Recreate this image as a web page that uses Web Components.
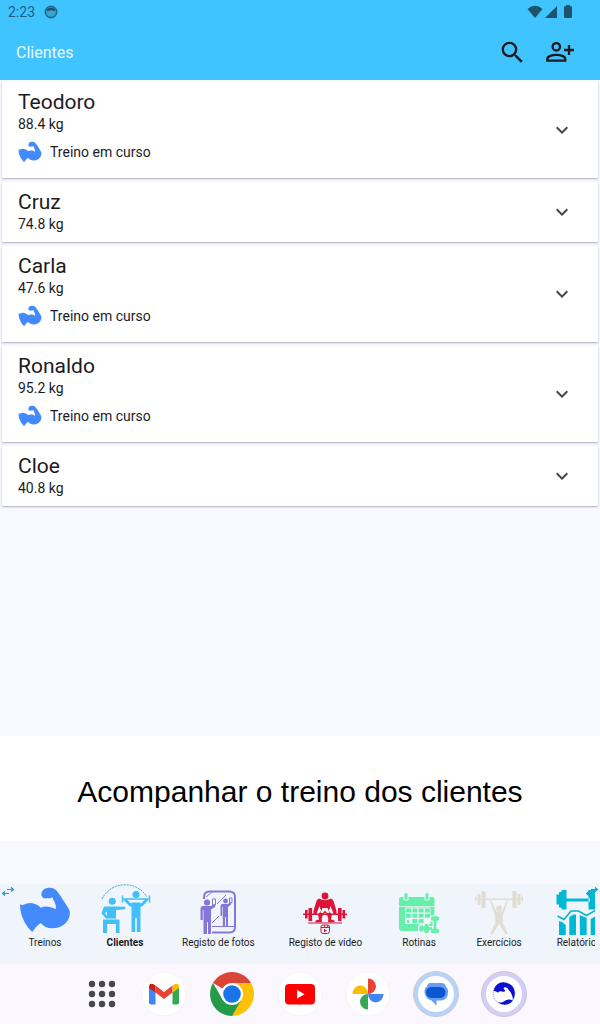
<!DOCTYPE html>
<html lang="pt">
<head>
<meta charset="utf-8">
<meta name="viewport" content="width=device-width, initial-scale=1">
<title>Clientes</title>
<style>
  body {
    margin: 0;
    background: #f8f9ff;
    color: #1b1b1f;
    font-family: Roboto, sans-serif;
  }
</style>
</head>
<body>
<training-app></training-app>

<script>
const ICONS = {
  camera: `<svg viewBox="0 0 14 14" width="14" height="14"><circle cx="7" cy="7" r="5.7" fill="#3aa5d4" stroke="#1d6a8c" stroke-width="1.6"/><path d="M2.600 4.800Q7 .4 11.400 4.800L10.400 6.500Q7 4.200 3.600 6.500z" fill="#1d546c"/></svg>`,
  wifi: `<svg viewBox="0 0 16 14" width="16" height="14"><path d="M.5 4Q8-2.500 15.500 4L8 13z" fill="#1d546c"/></svg>`,
  signal: `<svg viewBox="0 0 14 14" width="14" height="14"><path d="M13 1v12H1z" fill="#1d546c"/></svg>`,
  battery: `<svg viewBox="0 0 10 14" width="10" height="14"><path d="M3 0h4v1.200h1q1 0 1 1V12q0 1-1 1H2q-1 0-1-1V2.200q0-1 1-1h1z" fill="#1d546c"/></svg>`,
  search: `<svg viewBox="0 0 24 24" width="29" height="29"><path fill="#1b1b1f" d="M15.500 14h-.79l-.28-.27A6.471 6.471 0 0 0 16 9.500 6.500 6.500 0 1 0 9.500 16c1.610 0 3.090-.59 4.230-1.570l.27.28v.79l5 4.990L20.490 19l-4.990-5zm-6 0C7.010 14 5 11.990 5 9.500S7.010 5 9.500 5 14 7.010 14 9.500 11.990 14 9.500 14z"/></svg>`,
  addPerson: `<svg viewBox="0 0 28 24" width="28" height="24"><g fill="none" stroke="#1b1b1f" stroke-width="2.300"><circle cx="10.300" cy="6.800" r="3.700"/><path d="M1.300 20.700v-1.600c0-2.800 5-4.300 9-4.300s9 1.500 9 4.300v1.600z"/><path d="M23 5v10M18 10h10"/></g></svg>`,
  chevron: `<svg viewBox="0 0 24 24" width="24" height="24"><path fill="#46464a" d="M16.590 8.590 12 13.170 7.410 8.590 6 10l6 6 6-6z"/></svg>`,
  arm: `<svg viewBox="0 0 52 46"><path fill="#448aff" d="M1 17.300q2 1.500 4 .2 3-1.700 6.700-1.500 6 .5 10 4.700 4.300-2 9.300-.7 3 .8 5.700 2.300.8-3.300-1-7-1.500-2.600-2.500-5.100-2 1.600-4.400.9-3 .9-5.200-.6-2-2.300-1-5 2-4.500 6.700-4.800 5.200-.5 8.400 3 4.300 5.300 8.300 12.300 4.500 6 5 9.700-.5 8-6.700 12.300-5 3.500-11.600 3.300-6.500 0-11-5.300-4 2.500-8.400 9-4.500-4-7.300-9-5-9-5-18.700z"/></svg>`,
  swap: `<svg viewBox="0 0 12 9" width="12" height="9"><path d="M5 2.500h6M9 .5l2.300 2L9 4.500M7 6.500H1M3 4.500l-2.300 2L3 8.500" fill="none" stroke="#2196d8" stroke-width="1.200"/></svg>`,
  clients: `<svg viewBox="0 0 52 52"><path d="M3 15Q11 .8 26 .8 40 .8 48 13" fill="none" stroke="#2a9fd0" stroke-dasharray="2 1"/><g fill="#40bff8"><circle cx="13.300" cy="17.300" r="3.500"/><path d="M5 22.500h12l9 .3q1 1.200 0 2.500L17 26v8.500H8v-7.200l-2 2 3.300 4.400-1.800 1.300-5-5.500z"/><path d="M4 35.500h15.500q1 0 1 1V49h-3.600v-9H8v9H4z"/><circle cx="37" cy="10.500" r="3.500"/></g><g fill="none" stroke="#40bff8"><path d="M24 15h26M23.500 11.500v7M50.500 11.500v7" stroke-width="1.500"/><path d="m26 15.500 5.500 5.500 2 0M48 15.500 42.500 21l-2 0" stroke-width="3"/></g><path fill="#40bff8" d="M32.500 18.500h9V34h-9zM32.500 34h3.700v14h-3.700zM37.800 34h3.700v14h-3.700z"/></svg>`,
  photos: `<svg viewBox="0 0 52 52"><g fill="none" stroke="#8577d9" stroke-width="2"><path d="M12 15v-2q0-5.500 5.500-5.500h20q5.500 0 5.500 5.500v30q0 5.500-5.500 5.500H20"/><path d="M20 42.500h23M14 13l6-5M25 20l9-9M20 39l7-7" stroke-width="1"/><path d="M20.500 15h3v6h-3zM37.500 14h2.500v4.500h-2.500z" stroke-width="1"/></g><g fill="#8577d9"><circle cx="15" cy="18.500" r="3.100"/><path d="M11 22h8l2.500-1.500h2L23 23l-4 2.500V50h-3V38h-1V50h-3.500V26h-.7v10H8.500V25q0-3 2.500-3z"/><circle cx="33.500" cy="17" r="2.400"/><path d="M30.500 20h5.500l2-1.500h1.500l-.5 2-3 2.500v19.500h-2V33h-1v9.500h-2.200V23h-.6v9h-1.700v-9q0-3 2-3z"/></g></svg>`,
  video: `<svg viewBox="0 0 52 52"><g fill="#dc1437"><circle cx="26" cy="12" r="3.400"/><path d="M20 14.500q6 3.500 12 0 2.500 1 3 4l2.500 8.500v4h-2.500l-3.500-9q-.5 3-2 4.500l3.500 4-1 5 3.500 1v1.800h-6.500l.3-4-1.800-4.500q-1.500-1.500-3 0l-1.800 4.500.3 4h-6.500v-1.800l3.500-1-1-5 3.500-4q-1.500-1.500-2-4.500l-3.500 9h-2.500v-4l2.500-8.500q.5-3 3-4z"/><path d="M4 29.500h44v1.500H4zM6 26h2.600v8.500H6zM9.500 24h3.600v13H9.500zM43.500 26h2.600v8.500h-2.600zM39 24h3.600v13H39zM9 38.500h9v1H9zM34 38.500h9v1h-9zM18 38.500h16v1H18z"/></g><path d="m23.500 24-2 5h2.500l2-2.500 2 2.500h2.500l-2-5z" fill="#eff5fa"/><rect x="22" y="41" width="8.500" height="8.500" rx="2" fill="#eff5fa" stroke="#dc1437"/><path d="M22 43.500h8.500M25 41l1 2M28 41l1 2" stroke="#dc1437"/><path d="M25 44.800v3.400l3-1.700z" fill="#dc1437"/></svg>`,
  routines: `<svg viewBox="0 0 52 52"><g fill="#65efab"><path d="M6 15.500q0-2.500 2.500-2.500h30.500q2.500 0 2.500 2.500V22H6zM6 22.800h35.500V47H9q-3 0-3-3z"/><path d="M11 9.500q2.200-2 4 0V16h-4zM32 9.500q2.200-2 4 0V16h-4z" stroke="#eff5fa"/></g><path fill="#eff5fa" d="M12 23.500h25.500V40H12z"/><path fill="#65efab" d="M13 24.500h5v4h-5zM19.300 24.500h5v4h-5zM25.600 24.500h5v4h-5zM31.900 24.500h5v4h-5zM13 29.800h5v4h-5zM19.300 29.800h5v4h-5zM25.600 29.800h5v4h-5zM31.900 29.800h5v4h-5zM14 36h2v3h-2zM19.300 35.100h5v4h-5zM25.600 35.100h5v4h-5z"/><g fill="none" stroke-linecap="round"><path d="M42 34v13M29 44.500h10" stroke="#eff5fa" stroke-width="5"/><path d="M40 34.500h4M40 47h4M28.500 43v3M33 42v5" stroke="#eff5fa" stroke-width="7"/><path d="M42 34v13M28 44.500h10" stroke="#65efab" stroke-width="2.500"/><path d="M40 34.500h4M40 47h4M28.500 43.500v2M33.500 42v5" stroke="#65efab" stroke-width="4.500"/></g></svg>`,
  exercises: `<svg viewBox="0 0 52 52"><g fill="#e1ddd3"><path d="M3 14.500h46V16H3zM4.500 10h3v11h-3zM8.500 7h4v17h-4zM2 12.500h1.500v5H2zM44.500 10h3v11h-3zM39.500 7h4v17h-4zM48.500 12.500H50v5h-1.500z"/><circle cx="26" cy="24.500" r="3"/><path d="m18 16 5 11.500h6L34 16l1.200.8L30 31l-.5 7.500L35 50h-3l-6-10.500L20 50h-3l5.500-11.500L22 31l-5.200-14.200z"/></g></svg>`,
  reports: `<svg viewBox="0 0 52 52"><g fill="#00b8d4"><path d="M6 8h2l1-2h4.500v19.500H9l-1-2H6v-3H3.500v-10H6zM46 8h-2l-1-2h-7.500v19.500H43l1-2h2zM13 14.500h24v3H13zM6 37l3 1 3.700 3v10H6zM16.300 33l4-2.500h2.700V51h-6.700zM26.700 31l7 3v17h-6.700zM37.700 35l7-4v20h-7z"/></g><path d="m4.500 32 6.500 3.500 7-8.500h7.500l8 4.500L43 26" fill="none" stroke="#00b8d4" stroke-width="1.600"/></svg>`,
  apps: `<svg viewBox="0 0 44 44"><g fill="#46464f"><circle cx="12" cy="12" r="3.200"/><circle cx="22" cy="12" r="3.200"/><circle cx="32" cy="12" r="3.200"/><circle cx="12" cy="22" r="3.200"/><circle cx="22" cy="22" r="3.200"/><circle cx="32" cy="22" r="3.200"/><circle cx="12" cy="32" r="3.200"/><circle cx="22" cy="32" r="3.200"/><circle cx="32" cy="32" r="3.200"/></g></svg>`,
  gmail: `<svg viewBox="0 0 44 44"><circle cx="22" cy="22" r="21.800" fill="#fff" stroke="#eeeaf2" stroke-width=".5"/><path d="M7 15v15.500q0 2 2 2h4.500V20z" fill="#4285f4"/><path d="M37 15v15.500q0 2-2 2h-4.500V20z" fill="#34a853"/><path d="M13.500 13.500 22 20l8.500-6.500v7L22 27l-8.500-6.500z" fill="#ea4335"/><path d="M7 15q0-4 4-3l2.500 1.500v7L7 16z" fill="#c5221f"/><path d="M37 15q0-4-4-3l-2.500 1.500v7L37 16z" fill="#fbbc04"/></svg>`,
  chrome: `<svg viewBox="0 0 44 44"><path fill="#db4437" d="M22 22 3 11a22 22 0 0 1 38 0z"/><path fill="#ffc107" d="M22 22V11h19a22 22 0 0 1-19 33z"/><path fill="#259b48" d="M3 11a22 22 0 0 0 19 33l9.500-16.500L12.500 27.500z"/><circle cx="22" cy="22" r="11" fill="#fff"/><circle cx="22" cy="22" r="8.800" fill="#1a73e8"/></svg>`,
  youtube: `<svg viewBox="0 0 44 44"><circle cx="22" cy="22" r="21.800" fill="#fff" stroke="#eeeaf2" stroke-width=".5"/><rect x="7" y="12" width="30" height="20.500" rx="4" fill="#f00"/><path d="m19 17.800 7.500 4.400-7.500 4.400z" fill="#fff"/></svg>`,
  gallery: `<svg viewBox="0 0 44 44"><circle cx="22" cy="22" r="21.800" fill="#fff" stroke="#eeeaf2" stroke-width=".5"/><path d="M22 22V6.500a8 7.750 0 0 1 0 15.500z" fill="#ea4335"/><path d="M22 22h15.500a7.750 8.500 0 0 1-15.500 0z" fill="#4285f4"/><path d="M22 22v15.500a8 7.750 0 0 1 0-15.500z" fill="#34a853"/><path d="M22 22H6.500a7.750 8.500 0 0 1 15.500 0z" fill="#fbbc04"/></svg>`,
  messages: `<svg viewBox="0 0 46 46"><circle cx="23" cy="23" r="22.500" fill="#b7d3f7" stroke="#c9cad6"/><circle cx="23" cy="23" r="18" fill="#fff"/><path d="M17.500 12h11q4 0 4.500 4 2.500 1.500 2 6-.5 7-6.500 7.500h-5v5.300l-5-5.300q-6-1.500-7-8-.3-5 2.500-6 .5-3.500 3.500-3.500z" fill="#669df6"/><rect x="13" y="16" width="19.500" height="11" rx="5.500" fill="#0b57d0"/></svg>`,
  trainer: `<svg viewBox="0 0 46 46"><circle cx="23" cy="23" r="22.500" fill="#d2cef5" stroke="#c9c7d3"/><circle cx="23" cy="23" r="18" fill="#fff"/><circle cx="23" cy="22.500" r="10.800" fill="none" stroke="#0b10d2" stroke-width=".5" stroke-dasharray="1 1"/><path fill="#0b10d2" d="M12.500 20q.5-4 3.500-6.500 4-3 9-1.800 7 1.500 8.500 8 1 5-1.500 9-.5-6-4-9.500-2-3.500-4.500-3-2 1.500.5 3 .5 2-2 1.500-4-1-5 1-2-2-4.500-1.700zM16.500 31q4 1.500 7-1 2.500-2 5.500-1.500l3 1q-3.500 4.500-8.500 4.300-4-.3-7-2.800z"/></svg>`
};

class StatusBar extends HTMLElement {
  connectedCallback() {
    const root = this.attachShadow({ mode: 'open' });
    root.innerHTML = `
      <style>
        :host {
          display: flex;
          align-items: center;
          justify-content: space-between;
          height: 24px;
          padding: 0 27px 0 8px;
          background: #40c4ff;
          color: #1d5f7e;
          font-size: 14px;
        }
        div { display: flex; align-items: center; gap: 9px; }
        .system { gap: 1px; }
        .system svg:last-child { margin-left: 4px; }
        svg { display: block; }
      </style>
      <div><span>2:23</span>${ICONS.camera}</div>
      <div class="system">${ICONS.wifi}${ICONS.signal}${ICONS.battery}</div>
    `;
  }
}
customElements.define('status-bar', StatusBar);

class AppHeader extends HTMLElement {
  connectedCallback() {
    const root = this.attachShadow({ mode: 'open' });
    root.innerHTML = `
      <style>
        :host {
          display: flex;
          align-items: center;
          justify-content: space-between;
          height: 56px;
          padding: 0 16px;
          background: #40c4ff;
          color: #e9f8ff;
        }
        h1 { margin: 0; font-size: 16px; font-weight: 400; }
        div { display: flex; }
        button {
          display: grid;
          place-items: center;
          width: 48px;
          height: 48px;
          padding: 0;
          border: 0;
          background: none;
        }
      </style>
      <h1><slot></slot></h1>
      <div>
        <button aria-label="Pesquisar">${ICONS.search}</button>
        <button aria-label="Adicionar cliente">${ICONS.addPerson}</button>
      </div>
    `;
  }
}
customElements.define('app-header', AppHeader);

class ClientCard extends HTMLElement {
  connectedCallback() {
    const training = this.hasAttribute('training')
      ? `<p class="training">${ICONS.arm}<span>Treino em curso</span></p>`
      : '';
    const root = this.attachShadow({ mode: 'open' });
    root.innerHTML = `
      <style>
        :host {
          display: flex;
          align-items: center;
          justify-content: space-between;
          padding: 0 16px;
          background: #fff;
          border-radius: 1px;
          box-shadow: 0 1px 2px rgb(60 60 100 / 40%);
        }
        .info { padding: 6px 0 10px; }
        h2, p { margin: 0; font-weight: 400; }
        h2 { font-size: 21px; line-height: 28px; }
        p { font-size: 14px; line-height: 16px; }
        .training {
          display: flex;
          align-items: center;
          gap: 8px;
          height: 24px;
          margin: 8px 0 4px;
        }
        .training svg { width: 24px; height: 22px; }
        button {
          display: grid;
          place-items: center;
          width: 40px;
          height: 40px;
          padding: 0;
          border: 0;
          background: none;
        }
      </style>
      <div class="info">
        <h2>${this.getAttribute('name')}</h2>
        <p>${this.getAttribute('weight')}</p>
        ${training}
      </div>
      <button aria-label="Expandir">${ICONS.chevron}</button>
    `;
  }
}
customElements.define('client-card', ClientCard);

class CaptionBanner extends HTMLElement {
  connectedCallback() {
    const root = this.attachShadow({ mode: 'open' });
    root.innerHTML = `
      <style>
        :host {
          display: block;
          padding: 38px 16px 31px;
          background: #fff;
          color: #000;
          font-family: "Liberation Sans", Arial, sans-serif;
          font-size: 30px;
          line-height: 36px;
          text-align: center;
        }
      </style>
      <slot></slot>
    `;
  }
}
customElements.define('caption-banner', CaptionBanner);

class NavTab extends HTMLElement {
  connectedCallback() {
    const root = this.attachShadow({ mode: 'open' });
    root.innerHTML = `
      <style>
        :host { display: block; flex: none; }
        a {
          display: flex;
          flex-direction: column;
          align-items: center;
          min-width: 80px;
          color: #1b1b1f;
          font-size: 10px;
          line-height: 14px;
          text-decoration: none;
          white-space: nowrap;
        }
        :host([active]) a { font-weight: 700; }
        svg { width: 52px; height: 52px; }
        span { padding: 0 17px; }
      </style>
      <a href="#">${ICONS[this.getAttribute('icon')]}<span><slot></slot></span></a>
    `;
  }
}
customElements.define('nav-tab', NavTab);

class NavTabs extends HTMLElement {
  connectedCallback() {
    const root = this.attachShadow({ mode: 'open' });
    root.innerHTML = `
      <style>
        :host {
          display: block;
          position: relative;
          height: 80px;
          padding: 0 5px;
          background: #eff5fa;
        }
        nav { display: flex; overflow: hidden; }
        .hint { position: absolute; top: 3px; line-height: 0; }
        .start { left: 2px; }
        .end { right: 2px; }
      </style>
      <nav><slot></slot></nav>
      <span class="hint start">${ICONS.swap}</span>
      <span class="hint end">${ICONS.swap}</span>
    `;
  }
}
customElements.define('nav-tabs', NavTabs);

class TaskBar extends HTMLElement {
  connectedCallback() {
    const apps = [
      ['apps', 'Aplicações'],
      ['gmail', 'Gmail'],
      ['chrome', 'Chrome'],
      ['youtube', 'YouTube'],
      ['gallery', 'Fotos'],
      ['messages', 'Mensagens'],
      ['trainer', 'Treinador']
    ];
    const root = this.attachShadow({ mode: 'open' });
    root.innerHTML = `
      <style>
        :host {
          display: flex;
          align-items: center;
          justify-content: center;
          gap: 20px;
          height: 60px;
          padding-left: 12px;
          background: #fbf7ff;
        }
        button {
          display: grid;
          place-items: center;
          width: 48px;
          height: 48px;
          padding: 0;
          border: 0;
          background: none;
        }
        button:first-of-type { width: 36px; }
        svg { width: 44px; height: 44px; }
        button:first-of-type svg { margin: 0 -4px; }
        button:nth-last-child(-n + 2) svg { width: 46px; height: 46px; }
      </style>
      ${apps.map(([icon, label]) => `<button aria-label="${label}">${ICONS[icon]}</button>`).join('')}
    `;
  }
}
customElements.define('task-bar', TaskBar);

class TrainingApp extends HTMLElement {
  connectedCallback() {
    const root = this.attachShadow({ mode: 'open' });
    root.innerHTML = `
      <style>
        :host {
          display: flex;
          flex-direction: column;
          min-height: 100vh;
        }
        main {
          display: flex;
          flex: 1;
          flex-direction: column;
          gap: 4px;
          padding: 2px;
        }
        caption-banner { margin-bottom: 43px; }
      </style>
      <status-bar></status-bar>
      <app-header>Clientes</app-header>
      <main>
        <client-card name="Teodoro" weight="88.4 kg" training></client-card>
        <client-card name="Cruz" weight="74.8 kg"></client-card>
        <client-card name="Carla" weight="47.6 kg" training></client-card>
        <client-card name="Ronaldo" weight="95.2 kg" training></client-card>
        <client-card name="Cloe" weight="40.8 kg"></client-card>
      </main>
      <caption-banner>Acompanhar o treino dos clientes</caption-banner>
      <nav-tabs>
        <nav-tab icon="arm">Treinos</nav-tab>
        <nav-tab icon="clients" active>Clientes</nav-tab>
        <nav-tab icon="photos">Registo de fotos</nav-tab>
        <nav-tab icon="video">Registo de vídeo</nav-tab>
        <nav-tab icon="routines">Rotinas</nav-tab>
        <nav-tab icon="exercises">Exercícios</nav-tab>
        <nav-tab icon="reports">Relatórios</nav-tab>
      </nav-tabs>
      <task-bar></task-bar>
    `;
  }
}
customElements.define('training-app', TrainingApp);
</script>
</body>
</html>
